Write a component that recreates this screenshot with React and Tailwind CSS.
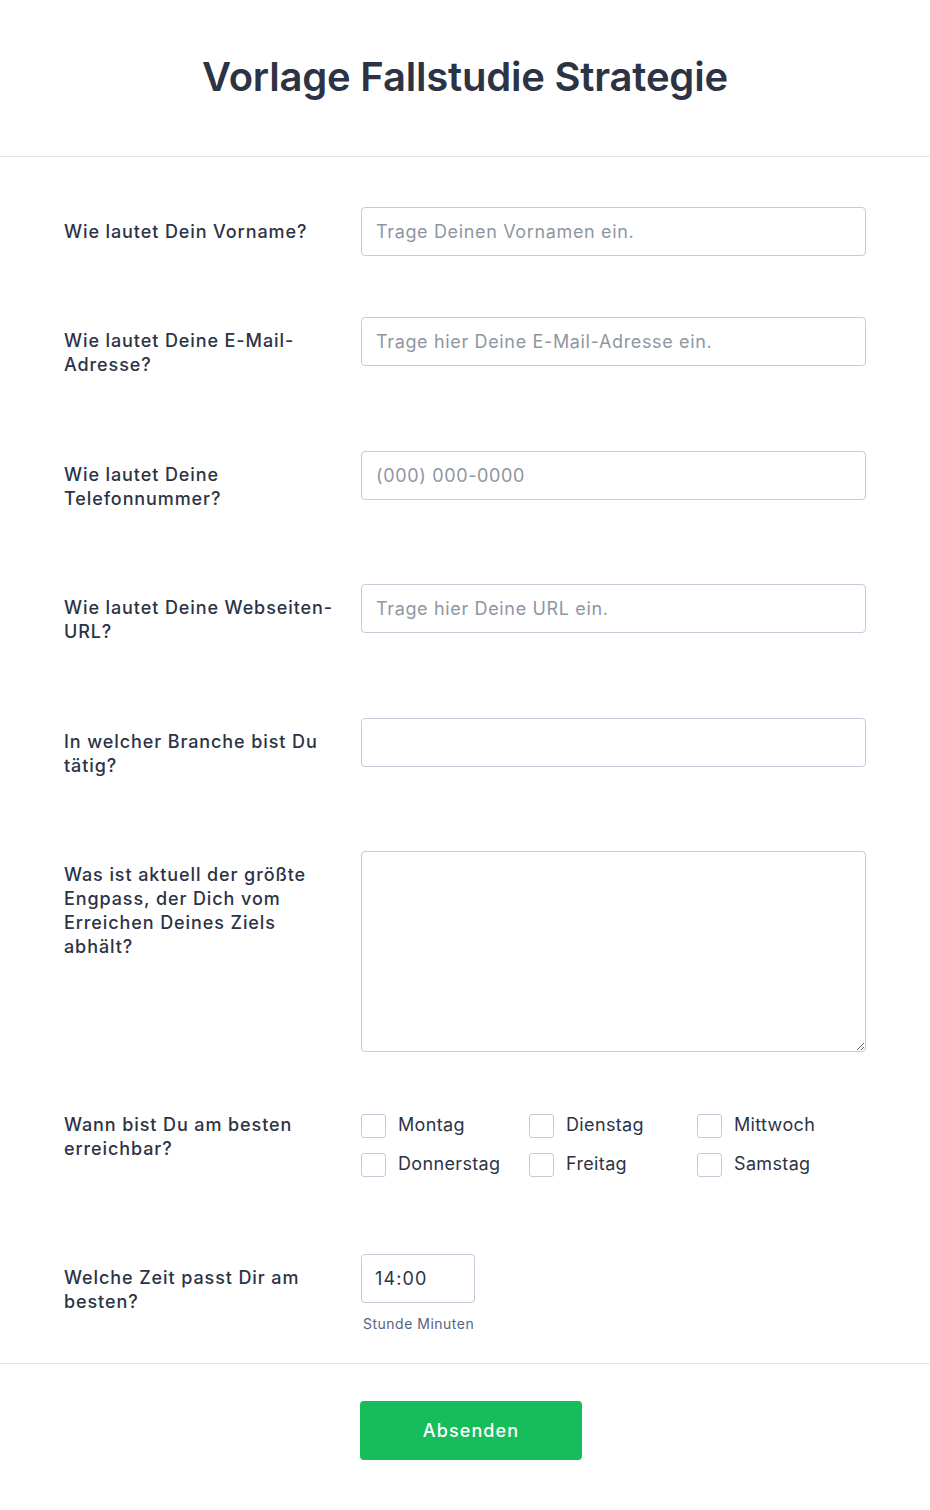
import React from "react";

const font = { fontFamily: "Inter, 'Noto Sans', sans-serif" };

function Row({ label, labelPt = "pt-3", labelPb = "pb-[12.5px]", pb = "pb-[31px]", children }) {
  return (
    <div className={`flex pt-[30px] ${pb}`}>
      <div className={`w-[297px] shrink-0 pr-4 ${labelPt} ${labelPb}`}>
        <div className="text-[18px] leading-6 font-medium tracking-[0.9px] text-[#2c3345]">{label}</div>
      </div>
      <div className="flex-1">{children}</div>
    </div>
  );
}

function TextInput({ placeholder }) {
  return (
    <input
      type="text"
      placeholder={placeholder}
      className="w-full h-[49px] rounded-[4px] border border-[#c3cad8] bg-white px-[14px] text-[18px] tracking-[0.65px] text-[#2c3345] placeholder:text-[#8f96a3] outline-none"
      style={font}
    />
  );
}

function Check({ label }) {
  return (
    <div className="flex items-start h-[39px]">
      <div className="mt-[1px] w-[25px] h-[24px] rounded-[3px] border border-[#c3cad8] bg-white shrink-0" />
      <span className="ml-[12px] text-[18px] leading-[26px] -mt-[1px] tracking-[0.35px] text-[#2c3345]">{label}</span>
    </div>
  );
}

export default function App() {
  return (
    <div className="w-[930px] bg-white" style={font}>
      <div className="border-b border-[#e3e5ec] pt-[53px] pb-[55px] text-center">
        <h1 className="text-[40px] leading-[48px] font-semibold text-[#2c3345] tracking-[-0.2px]">
          Vorlage Fallstudie Strategie
        </h1>
      </div>

      <div className="px-16 pt-[20px]">
        <Row label="Wie lautet Dein Vorname?" labelPt="pt-[13px]" labelPb="pb-0">
          <TextInput placeholder="Trage Deinen Vornamen ein." />
        </Row>
        <Row label="Wie lautet Deine E-Mail-Adresse?">
          <TextInput placeholder="Trage hier Deine E-Mail-Adresse ein." />
        </Row>
        <Row label="Wie lautet Deine Telefonnummer?">
          <TextInput placeholder="(000) 000-0000" />
        </Row>
        <Row label="Wie lautet Deine Webseiten-URL?">
          <TextInput placeholder="Trage hier Deine URL ein." />
        </Row>
        <Row label="In welcher Branche bist Du tätig?">
          <TextInput placeholder="" />
        </Row>
        <Row label="Was ist aktuell der größte Engpass, der Dich vom Erreichen Deines Ziels abhält?">
          <textarea
            className="block w-full h-[201px] rounded-[4px] border border-[#c3cad8] bg-white px-[14px] py-3 text-[18px] text-[#2c3345] outline-none"
            style={font}
          />
        </Row>
        <Row label="Wann bist Du am besten erreichbar?" labelPt="pt-0" labelPb="pb-0">
          <div className="grid grid-cols-3 w-[504px] h-[80px] content-start">
            <Check label="Montag" />
            <Check label="Dienstag" />
            <Check label="Mittwoch" />
            <Check label="Donnerstag" />
            <Check label="Freitag" />
            <Check label="Samstag" />
          </div>
        </Row>
        <Row label="Welche Zeit passt Dir am besten?" labelPb="pb-0" pb="pb-[30px]">
          <div className="w-[114px] h-[49px] rounded-[4px] border border-[#c3cad8] bg-white px-[13px] flex items-center text-[18px] tracking-[1.1px] text-[#2c3345]">
            14:00
          </div>
          <div className="mt-[12px] ml-[2px] text-[14px] leading-[18px] tracking-[0.5px] text-[#57647e]">Stunde Minuten</div>
        </Row>
      </div>

      <div className="border-t border-[#e3e5ec] pt-[37px] pb-[50px] flex justify-center pl-3">
        <button className="w-[222px] h-[59px] rounded-[4px] bg-[#18bd5b] text-white text-[18px] font-medium tracking-[1.1px]" style={font}>
          Absenden
        </button>
      </div>
    </div>
  );
}
